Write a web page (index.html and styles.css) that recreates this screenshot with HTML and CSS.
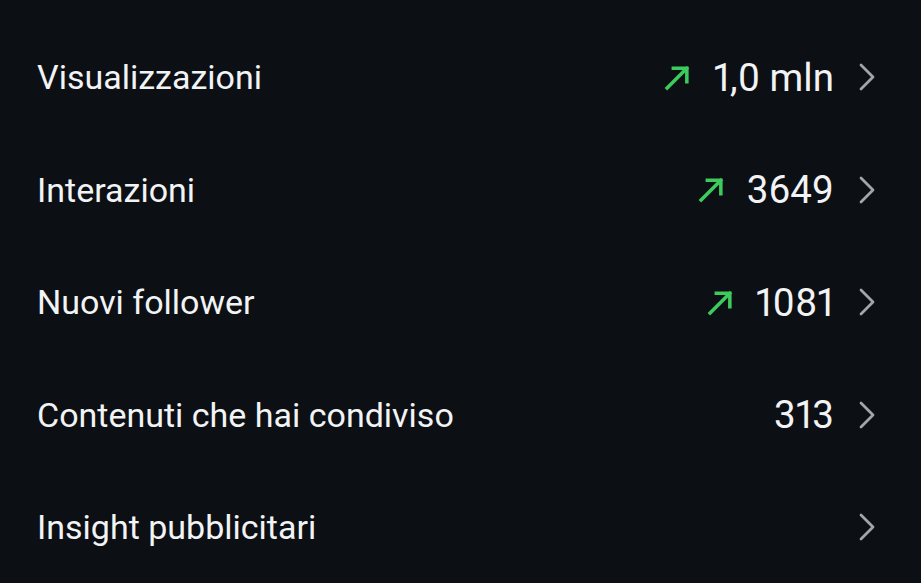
FILE: index.html
```html
<!DOCTYPE html>
<html lang="it">
<head>
<meta charset="utf-8">
<link rel="stylesheet" href="styles.css">
</head>
<body>
<ul class="list">
  <li class="row">
    <span class="label">Visualizzazioni</span>
    <span class="right">
      <svg class="trend" viewBox="0 0 26 26"><path d="M3 23 L22 4 M9 4 H22 V17"/></svg>
      <span class="value">1,0 mln</span>
      <svg class="chev" viewBox="0 0 18 30"><path d="M3 3 L15 15 L3 27"/></svg>
    </span>
  </li>
  <li class="row">
    <span class="label">Interazioni</span>
    <span class="right">
      <svg class="trend" viewBox="0 0 26 26"><path d="M3 23 L22 4 M9 4 H22 V17"/></svg>
      <span class="value">3649</span>
      <svg class="chev" viewBox="0 0 18 30"><path d="M3 3 L15 15 L3 27"/></svg>
    </span>
  </li>
  <li class="row">
    <span class="label">Nuovi follower</span>
    <span class="right">
      <svg class="trend" viewBox="0 0 26 26"><path d="M3 23 L22 4 M9 4 H22 V17"/></svg>
      <span class="value">1081</span>
      <svg class="chev" viewBox="0 0 18 30"><path d="M3 3 L15 15 L3 27"/></svg>
    </span>
  </li>
  <li class="row">
    <span class="label">Contenuti che hai condiviso</span>
    <span class="right">
      <span class="value">313</span>
      <svg class="chev" viewBox="0 0 18 30"><path d="M3 3 L15 15 L3 27"/></svg>
    </span>
  </li>
  <li class="row">
    <span class="label">Insight pubblicitari</span>
    <span class="right">
      <svg class="chev" viewBox="0 0 18 30"><path d="M3 3 L15 15 L3 27"/></svg>
    </span>
  </li>
</ul>
</body>
</html>
```
FILE: styles.css
```css
html, body {
  margin: 0;
  padding: 0;
  background: #0c0f14;
  height: 100%;
  overflow: hidden;
}
.list {
  list-style: none;
  margin: 0;
  padding: 21px 45px 0 37px;
  font-family: Roboto, "Liberation Sans", sans-serif;
  color: #f2f3f5;
}
.row {
  height: 112.5px;
  display: flex;
  align-items: center;
  justify-content: space-between;
}
.label {
  font-size: 34px;
}
.right {
  display: flex;
  align-items: center;
}
.value {
  font-size: 38.5px;
  margin-right: 24px;
  font-variant-numeric: proportional-nums;
}
.trend {
  width: 27px;
  height: 27px;
  margin-right: 22px;
  fill: none;
  stroke: #3dcb5d;
  stroke-width: 3.4;
  stroke-linecap: square;
}
.chev {
  width: 18px;
  height: 30px;
  fill: none;
  stroke: #a3a5aa;
  stroke-width: 2.8;
  stroke-linecap: round;
  stroke-linejoin: round;
}
```
